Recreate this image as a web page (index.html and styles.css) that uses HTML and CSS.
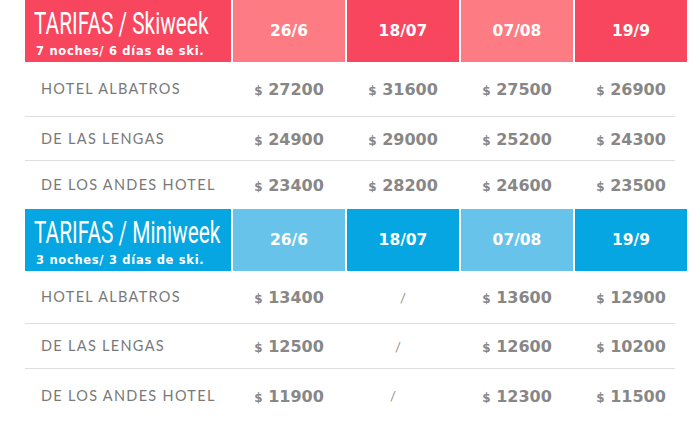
FILE: index.html
```html
<!DOCTYPE html>
<html lang="es">
<head>
<meta charset="utf-8">
<title>Tarifas</title>
<link rel="stylesheet" href="styles.css">
</head>
<body>
<div class="page">
  <section class="tbl ski">
    <div class="head">
      <div class="title">
        <div class="t1"><span>TARIFAS / Skiweek</span></div>
        <div class="t2">7 noches/ 6 días de ski.</div>
      </div>
      <div class="date light">26/6</div>
      <div class="date">18/07</div>
      <div class="date light">07/08</div>
      <div class="date">19/9</div>
    </div>
    <div class="row">
      <div class="name">HOTEL ALBATROS</div>
      <div class="price"><span class="cur">$</span> 27200</div>
      <div class="price"><span class="cur">$</span> 31600</div>
      <div class="price"><span class="cur">$</span> 27500</div>
      <div class="price"><span class="cur">$</span> 26900</div>
    </div>
    <div class="row">
      <div class="name">DE LAS LENGAS</div>
      <div class="price"><span class="cur">$</span> 24900</div>
      <div class="price"><span class="cur">$</span> 29000</div>
      <div class="price"><span class="cur">$</span> 25200</div>
      <div class="price"><span class="cur">$</span> 24300</div>
    </div>
    <div class="row">
      <div class="name">DE LOS ANDES HOTEL</div>
      <div class="price"><span class="cur">$</span> 23400</div>
      <div class="price"><span class="cur">$</span> 28200</div>
      <div class="price"><span class="cur">$</span> 24600</div>
      <div class="price"><span class="cur">$</span> 23500</div>
    </div>
  </section>
  <section class="tbl mini">
    <div class="head">
      <div class="title">
        <div class="t1"><span>TARIFAS / Miniweek</span></div>
        <div class="t2">3 noches/ 3 días de ski.</div>
      </div>
      <div class="date light">26/6</div>
      <div class="date">18/07</div>
      <div class="date light">07/08</div>
      <div class="date">19/9</div>
    </div>
    <div class="row">
      <div class="name">HOTEL ALBATROS</div>
      <div class="price"><span class="cur">$</span> 13400</div>
      <div class="price none">/</div>
      <div class="price"><span class="cur">$</span> 13600</div>
      <div class="price"><span class="cur">$</span> 12900</div>
    </div>
    <div class="row">
      <div class="name">DE LAS LENGAS</div>
      <div class="price"><span class="cur">$</span> 12500</div>
      <div class="price none">/</div>
      <div class="price"><span class="cur">$</span> 12600</div>
      <div class="price"><span class="cur">$</span> 10200</div>
    </div>
    <div class="row">
      <div class="name">DE LOS ANDES HOTEL</div>
      <div class="price"><span class="cur">$</span> 11900</div>
      <div class="price none">/</div>
      <div class="price"><span class="cur">$</span> 12300</div>
      <div class="price"><span class="cur">$</span> 11500</div>
    </div>
  </section>
</div>
</body>
</html>
```
FILE: styles.css
```css
html, body {
  margin: 0;
  padding: 0;
  background: #ffffff;
}
.page {
  width: 700px;
  height: 442px;
  padding-left: 25px;
  box-sizing: border-box;
  font-family: "DejaVu Sans", sans-serif;
}
.tbl {
  display: flex;
  flex-direction: column;
}
.head,
.row {
  display: grid;
  grid-template-columns: 206px repeat(4, 112px);
  column-gap: 2px;
}
.head {
  height: 62px;
}
.title {
  display: flex;
  flex-direction: column;
  padding-left: 9px;
  color: #ffffff;
  overflow: hidden;
}
.t1 {
  height: 40px;
  padding-top: 3px;
  font-family: "Roboto", sans-serif;
  font-weight: 400;
  font-size: 32px;
  line-height: 40px;
  white-space: nowrap;
}
.t1 span {
  display: inline-block;
  transform: scaleX(0.65);
  transform-origin: left center;
}
.t2 {
  font-family: "DejaVu Sans", sans-serif;
  font-weight: 700;
  font-size: 11.5px;
  line-height: 16px;
  padding-left: 2px;
  letter-spacing: 0.7px;
  white-space: nowrap;
}
.date {
  display: flex;
  align-items: center;
  justify-content: center;
  color: #ffffff;
  font-weight: 700;
  font-size: 15.5px;
}
.ski .title, .ski .date { background: #f8465e; }
.ski .date.light { background: #fd7c83; }
.mini .title, .mini .date { background: #05a6e1; }
.mini .date.light { background: #68c3eb; }

.row {
  align-items: center;
  background: linear-gradient(#dedede, #dedede) no-repeat left bottom / 650px 1px;
}
.row:last-child { background: none; }
.ski .row:nth-child(2) { height: 55px; }
.ski .row:nth-child(3) { height: 44px; }
.ski .row:nth-child(4) { height: 48px; }
.mini .row:nth-child(2) { height: 53px; }
.mini .row:nth-child(3) { height: 45px; }
.mini .row:nth-child(4) { height: 54px; }

.name {
  padding-left: 16px;
  padding-bottom: 2px;
  color: #797979;
  font-family: "Lato", sans-serif;
  font-size: 14.5px;
  letter-spacing: 1.3px;
  white-space: nowrap;
}
.price {
  text-align: center;
  color: #878787;
  font-weight: 700;
  font-size: 16px;
  white-space: nowrap;
}
.cur {
  font-size: 12px;
}
.none {
  font-weight: 400;
  font-size: 13px;
  font-family: "Lato", sans-serif;
}
.row:nth-child(3) .none { padding-right: 10px; }
.row:nth-child(4) .none { padding-right: 20px; }
```
